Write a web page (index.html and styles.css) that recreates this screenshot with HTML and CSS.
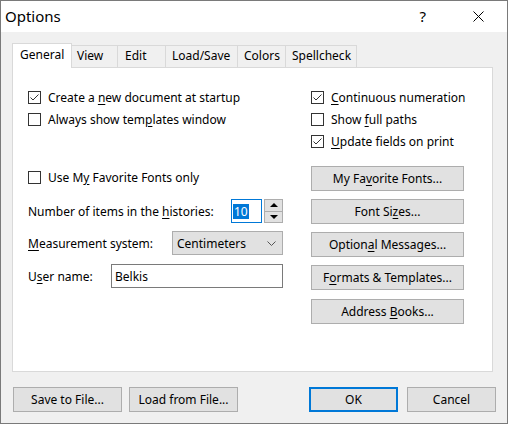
FILE: index.html
```html
<!DOCTYPE html>
<html>
<head>
<meta charset="utf-8">
<title>Options</title>
<link rel="stylesheet" href="styles.css">
</head>
<body>
<div class="window">
  <div class="titlebar">
    <span class="title">Options</span>
    <span class="help">?</span>
    <svg class="close" width="11" height="11" viewBox="0 0 11 11"><path d="M0.5 0.5 L10.5 10.5 M10.5 0.5 L0.5 10.5" stroke="#000" stroke-width="1" fill="none"/></svg>
  </div>
  <div class="content">
    <div class="tabs">
      <div class="tab active">General</div>
      <div class="tab t-view">View</div>
      <div class="tab t-edit">Edit</div>
      <div class="tab t-load">Load/Save</div>
      <div class="tab t-colors">Colors</div>
      <div class="tab t-spell">Spellcheck</div>
    </div>
    <div class="panel">
      <div class="col col-left">
        <div class="check"><span class="box"><svg width="11" height="11" viewBox="0 0 11 11"><path d="M1.5 5.5 L4 8 L9.5 2.5" stroke="#333" stroke-width="1" fill="none"/></svg></span><span>Create a <u>n</u>ew document at startup</span></div>
        <div class="check"><span class="box"></span><span>Always show tem<u>p</u>lates window</span></div>
        <div class="check fav"><span class="box"></span><span>Use M<u>y</u> Favorite Fonts only</span></div>
        <div class="field spin-row">
          <span>Number of items in the <u>h</u>istories:</span>
          <div class="spin">
            <div class="spin-input"><span class="sel">10</span></div>
            <div class="spin-btns">
              <div class="spin-btn"><span class="tri-up"></span></div>
              <div class="spin-btn"><span class="tri-down"></span></div>
            </div>
          </div>
        </div>
        <div class="field combo-row">
          <span><u>M</u>easurement system:</span>
          <div class="combo"><span>Centimeters</span><svg width="9" height="5" viewBox="0 0 9 5"><path d="M0.5 0.5 L4.5 4.5 L8.5 0.5" stroke="#555" stroke-width="1" fill="none"/></svg></div>
        </div>
        <div class="field user-row">
          <span>U<u>s</u>er name:</span>
          <div class="textbox"><span>Belkis</span></div>
        </div>
      </div>
      <div class="col col-right">
        <div class="check"><span class="box"><svg width="11" height="11" viewBox="0 0 11 11"><path d="M1.5 5.5 L4 8 L9.5 2.5" stroke="#333" stroke-width="1" fill="none"/></svg></span><span><u>C</u>ontinuous numeration</span></div>
        <div class="check"><span class="box"></span><span>Show <u>f</u>ull paths</span></div>
        <div class="check"><span class="box"><svg width="11" height="11" viewBox="0 0 11 11"><path d="M1.5 5.5 L4 8 L9.5 2.5" stroke="#333" stroke-width="1" fill="none"/></svg></span><span><u>U</u>pdate fields on print</span></div>
        <div class="btn-list">
          <div class="btn"><span>My Fa<u>v</u>orite Fonts...</span></div>
          <div class="btn"><span>Font Si<u>z</u>es...</span></div>
          <div class="btn"><span>Option<u>a</u>l Messages...</span></div>
          <div class="btn"><span>F<u>o</u>rmats &amp; Templates...</span></div>
          <div class="btn last"><span>Address <u>B</u>ooks...</span></div>
        </div>
      </div>
    </div>
    <div class="footer">
      <div class="btn fbtn"><span>Save to File...</span></div>
      <div class="btn fbtn"><span>Load from File...</span></div>
      <div class="spacer"></div>
      <div class="btn fbtn small default"><span>OK</span></div>
      <div class="btn fbtn small"><span>Cancel</span></div>
    </div>
  </div>
</div>
</body>
</html>
```
FILE: styles.css
```css
html, body {
  margin: 0;
  padding: 0;
  background: #f0f0f0;
}
body {
  font-family: "Noto Sans", "Open Sans", sans-serif;
  font-size: 12px;
  color: #000;
  white-space: nowrap;
}
u {
  text-decoration: underline;
  text-underline-offset: 2px;
  text-decoration-thickness: 1px;
}
.window {
  width: 508px;
  height: 424px;
  box-sizing: border-box;
  border: 1px solid #7a7a7a;
  background: #f0f0f0;
  display: flex;
  flex-direction: column;
}
.titlebar {
  height: 31px;
  flex: none;
  background: #fff;
  display: flex;
  align-items: center;
  padding-left: 4px;
}
.title {
  font-size: 15px;
  flex: 1;
  padding-bottom: 1px;
}
.help {
  font-size: 15px;
  margin-right: 47px;
  padding-bottom: 1px;
}
.close {
  margin-right: 23px;
  display: block;
}
.content {
  padding: 11px 14px 0 11px;
  display: flex;
  flex-direction: column;
}
.tabs {
  display: flex;
  height: 25px;
  align-items: flex-start;
}
.tab {
  box-sizing: border-box;
  height: 22px;
  margin-top: 2px;
  border-top: 1px solid #d9d9d9;
  border-right: 1px solid #d9d9d9;
  background: #f0f0f0;
  line-height: 20px;
  padding-left: 5px;
}
.tab.active {
  height: 25px;
  margin-top: 0;
  width: 60px;
  border: 1px solid #d9d9d9;
  border-bottom: none;
  background: #fff;
  position: relative;
  z-index: 1;
  line-height: 22px;
  padding-left: 7px;
}
.t-view { width: 46px; }
.t-edit { width: 48px; padding-left: 7px; }
.t-load { width: 72px; padding-left: 6px; }
.t-colors { width: 48px; padding-left: 6px; }
.t-spell { width: 71px; padding-left: 6px; }
.panel {
  margin-top: -1px;
  height: 305px;
  box-sizing: border-box;
  border: 1px solid #d9d9d9;
  background: #fff;
  padding: 18px 0 0 15px;
  display: flex;
  gap: 28px;
}
.col {
  display: flex;
  flex-direction: column;
}
.col-left { width: 255px; }
.col-right { width: 153px; }
.check {
  height: 22px;
  display: flex;
  align-items: center;
  gap: 7px;
}
.box {
  width: 13px;
  height: 13px;
  box-sizing: border-box;
  border: 1px solid #333;
  background: #fff;
  display: flex;
  align-items: center;
  justify-content: center;
  flex: none;
}
.box svg { display: block; }
.fav { margin-top: 36px; }
.field {
  display: flex;
  align-items: center;
  justify-content: space-between;
  height: 24px;
}
.spin-row { margin-top: 11px; }
.combo-row { margin-top: 8px; }
.user-row { margin-top: 9px; }
.spin {
  display: flex;
  gap: 2px;
  height: 24px;
}
.spin-input {
  width: 31px;
  box-sizing: border-box;
  border: 1px solid #0078d7;
  background: #fff;
  padding: 0 0 0 1px;
  display: flex;
  align-items: center;
}
.sel {
  background: #0078d7;
  color: #fff;
  line-height: 15px;
  padding: 0 1px;
}
.spin-btns {
  width: 19px;
  display: flex;
  flex-direction: column;
}
.spin-btn {
  flex: 1;
  box-sizing: border-box;
  border: 1px solid #adadad;
  background: #e1e1e1;
  display: flex;
  align-items: center;
  justify-content: center;
}
.spin-btn + .spin-btn { border-top: none; }
.tri-up {
  width: 0;
  height: 0;
  border-left: 4px solid transparent;
  border-right: 4px solid transparent;
  border-bottom: 4px solid #000;
}
.tri-down {
  width: 0;
  height: 0;
  border-left: 4px solid transparent;
  border-right: 4px solid transparent;
  border-top: 4px solid #000;
}
.combo {
  width: 111px;
  height: 24px;
  box-sizing: border-box;
  border: 1px solid #adadad;
  background: #e1e1e1;
  display: flex;
  align-items: center;
  justify-content: space-between;
  padding: 0 6px 0 4px;
}
.combo svg { display: block; }
.textbox {
  width: 172px;
  height: 24px;
  box-sizing: border-box;
  border: 1px solid #7a7a7a;
  background: #fff;
  padding-left: 3px;
  display: flex;
  align-items: center;
}
.btn-list {
  margin-top: 14px;
  display: flex;
  flex-direction: column;
  gap: 8px;
}
.btn {
  height: 25px;
  box-sizing: border-box;
  border: 1px solid #adadad;
  background: #e1e1e1;
  display: flex;
  align-items: center;
  justify-content: center;
}
.btn.last { margin-top: 1px; }
.footer {
  margin: 15px -3px 0 1px;
  display: flex;
  gap: 7px;
}
.fbtn { width: 109px; }
.spacer { flex: 1; }
.fbtn.small { width: 89px; }
.fbtn.default {
  border: 2px solid #0078d7;
  margin-right: 2px;
}
```
